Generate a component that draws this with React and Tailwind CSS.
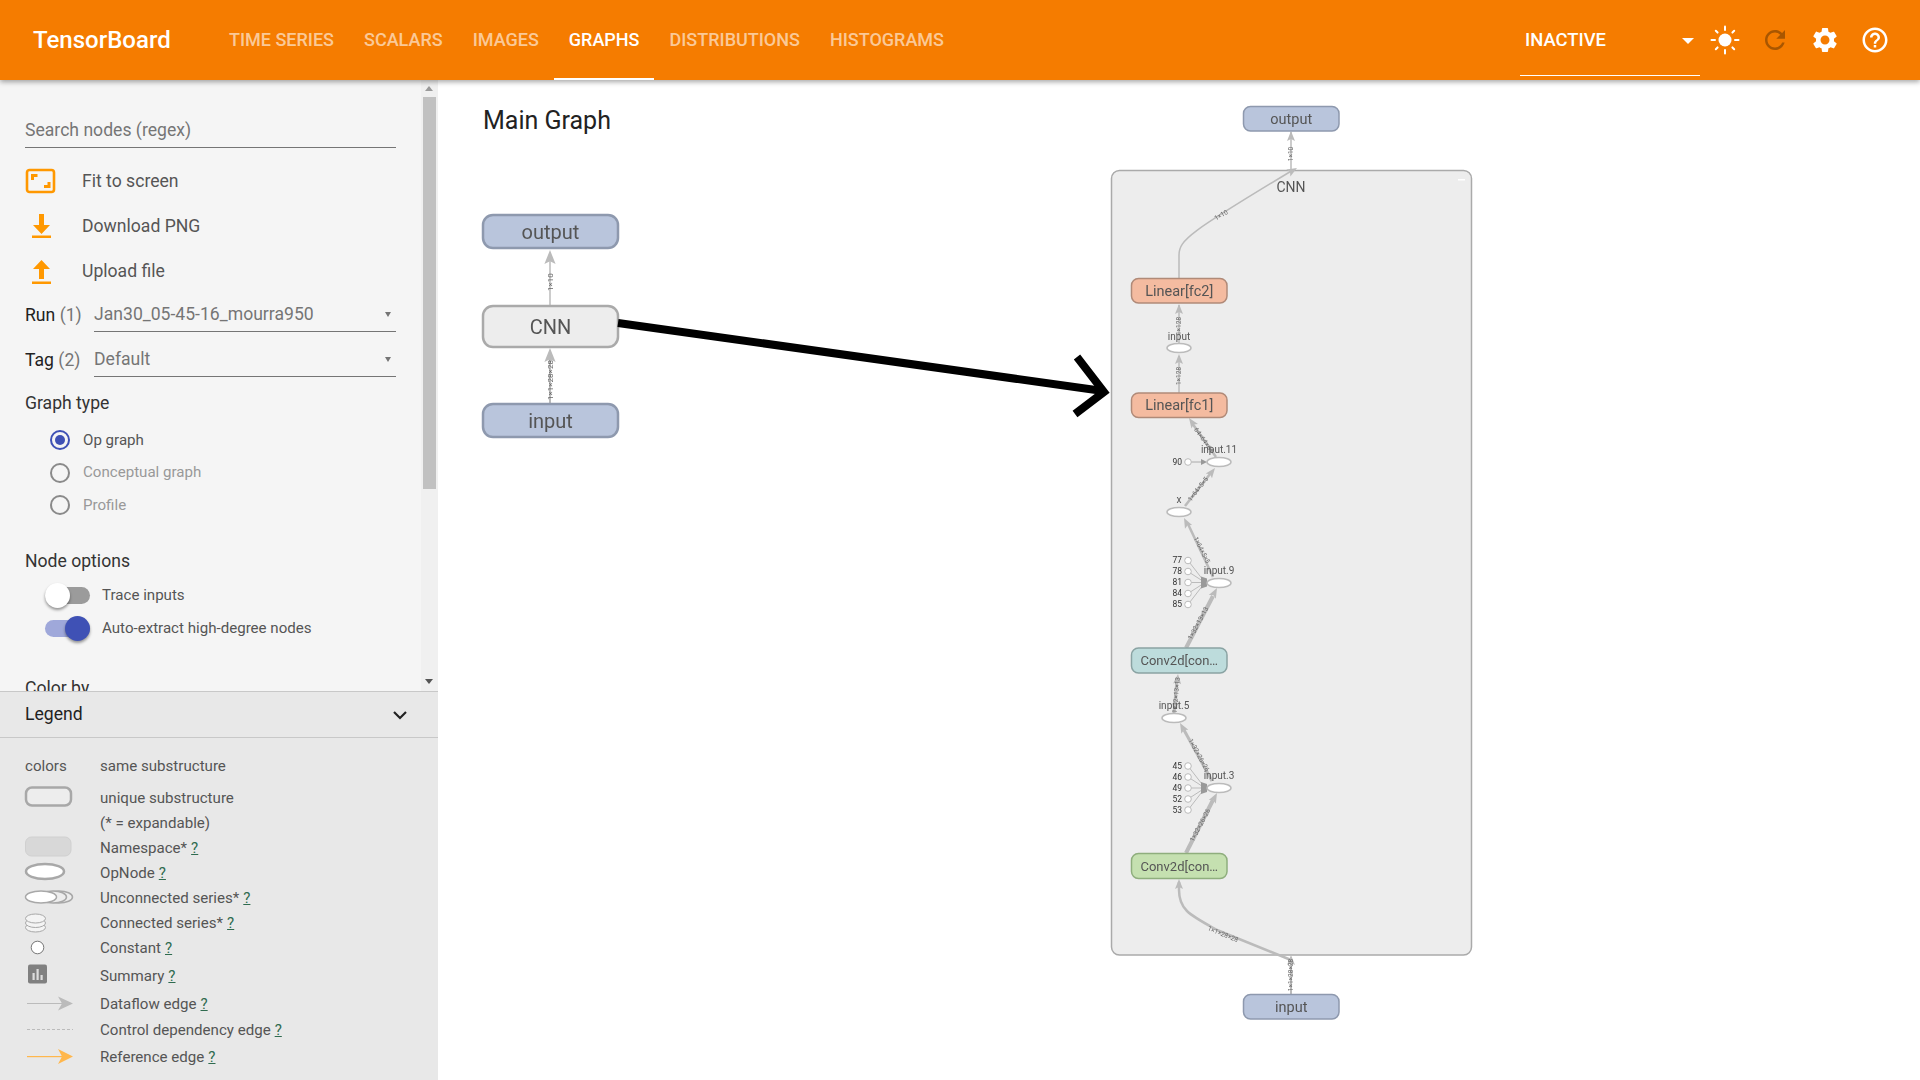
import React from "react";

const FONT = "font-['Roboto','Liberation_Sans',sans-serif]";
const P = {
  settings: "M19.14 12.94c.04-.3.06-.61.06-.94 0-.32-.02-.64-.07-.94l2.03-1.58c.18-.14.23-.41.12-.61l-1.92-3.32c-.12-.22-.37-.29-.59-.22l-2.39.96c-.5-.38-1.03-.7-1.62-.94l-.36-2.54c-.04-.24-.24-.41-.48-.41h-3.84c-.24 0-.43.17-.47.41l-.36 2.54c-.59.24-1.13.57-1.62.94l-2.39-.96c-.22-.08-.47 0-.59.22L2.74 8.87c-.12.21-.08.47.12.61l2.03 1.58c-.05.3-.09.63-.09.94s.02.64.07.94l-2.03 1.58c-.18.14-.23.41-.12.61l1.92 3.32c.12.22.37.29.59.22l2.39-.96c.5.38 1.03.7 1.62.94l.36 2.54c.05.24.24.41.48.41h3.84c.24 0 .44-.17.47-.41l.36-2.54c.59-.24 1.13-.56 1.62-.94l2.39.96c.22.08.47 0 .59-.22l1.92-3.32c.12-.22.07-.47-.12-.61l-2.01-1.58zM12 15.6c-1.98 0-3.6-1.62-3.6-3.6s1.62-3.6 3.6-3.6 3.6 1.62 3.6 3.6-1.62 3.6-3.6 3.6z",
  refresh: "M17.65 6.35C16.2 4.9 14.21 4 12 4c-4.42 0-7.99 3.58-7.99 8s3.57 8 7.99 8c3.73 0 6.84-2.55 7.73-6h-2.08c-.82 2.33-3.04 4-5.65 4-3.31 0-6-2.69-6-6s2.69-6 6-6c1.66 0 3.14.69 4.22 1.78L13 11h7V4l-2.35 2.35z",
  help: "M11 18h2v-2h-2v2zm1-16C6.48 2 2 6.48 2 12s4.48 10 10 10 10-4.48 10-10S17.52 2 12 2zm0 18c-4.41 0-8-3.59-8-8s3.59-8 8-8 8 3.59 8 8-3.59 8-8 8zm0-14c-2.21 0-4 1.79-4 4h2c0-1.1.9-2 2-2s2 .9 2 2c0 2-3 1.75-3 5h2c0-2.25 3-2.5 3-5 0-2.21-1.79-4-4-4z",
};

function Glyph({ d, color = "#fff" }) {
  return (
    <svg width="30" height="30" viewBox="0 0 24 24" fill={color}>
      <path d={d} />
    </svg>
  );
}

function Sun() {
  const rays = [0, 45, 90, 135, 180, 225, 270, 315];
  return (
    <svg width="30" height="30" viewBox="-15 -15 30 30">
      <circle r="6.5" fill="#fff" />
      {rays.map((a) => (
        <line key={a} x1="0" y1={a % 90 === 0 ? -10 : -10.5} x2="0" y2={a % 90 === 0 ? -13.5 : -13} stroke="#fff" strokeWidth="2" strokeLinecap="round" transform={`rotate(${a})`} />
      ))}
    </svg>
  );
}

function Tab({ label, active }) {
  return (
    <div className={`h-20 px-[15px] flex items-center text-[18px] font-medium border-b-2 ${active ? "text-white border-white" : "text-white/60 border-transparent"}`}>
      {label}
    </div>
  );
}

function Header() {
  return (
    <header className="relative z-10 h-20 shrink-0 bg-[#f57c00] flex items-center justify-between pr-5 shadow-[0_2px_5px_rgba(0,0,0,0.35)]">
      <div className="flex items-center">
        <div className="w-[214px] pl-[33px] text-white text-[24px] font-medium">TensorBoard</div>
        <Tab label="TIME SERIES" />
        <Tab label="SCALARS" />
        <Tab label="IMAGES" />
        <Tab label="GRAPHS" active />
        <Tab label="DISTRIBUTIONS" />
        <Tab label="HISTOGRAMS" />
      </div>
      <div className="flex items-center">
        <div className="relative w-[180px] h-20 flex items-center pl-[5px] text-white text-[18.4px] font-medium">
          INACTIVE
          <div className="absolute left-[162px] top-[38px] w-0 h-0 border-l-[6.5px] border-r-[6.5px] border-t-[6.5px] border-l-transparent border-r-transparent border-t-white" />
          <div className="absolute left-0 right-0 bottom-1 h-px bg-white" />
        </div>
        <div className="w-[50px] flex justify-center"><Sun /></div>
        <div className="w-[50px] flex justify-center"><Glyph d={P.refresh} color="#a85600" /></div>
        <div className="w-[50px] flex justify-center"><Glyph d={P.settings} /></div>
        <div className="w-[50px] flex justify-center"><Glyph d={P.help} /></div>
      </div>
    </header>
  );
}

function FitIcon() {
  return (
    <svg width="32" height="26" viewBox="0 0 32 26" fill="none" stroke="#ff9800" strokeWidth="2.6">
      <rect x="2" y="2" width="27" height="22" rx="2.5" />
      <path d="M7.5 12V7.5h5M24 14v4.5h-5" strokeWidth="3" />
    </svg>
  );
}
function DownloadIcon() {
  return (
    <svg width="32" height="26" viewBox="0 0 32 26" fill="#ff9800">
      <path d="M14 1h5v11h6l-8.5 9L8 12h6z" />
      <rect x="7" y="22.5" width="19" height="2.5" />
    </svg>
  );
}
function UploadIcon() {
  return (
    <svg width="32" height="26" viewBox="0 0 32 26" fill="#ff9800">
      <path d="M14 20h5V10h6L16.5 1 8 10h6z" />
      <rect x="7" y="22.5" width="19" height="2.5" />
    </svg>
  );
}

function ActionRow({ icon, label }) {
  return (
    <div className="h-[45.25px] flex items-center">
      <div className="w-[57px] shrink-0">{icon}</div>
      <span className="text-[17.6px] text-[#555]">{label}</span>
    </div>
  );
}

function SelectRow({ label, count, value, className }) {
  return (
    <div className={`flex items-center ${className}`}>
      <span className="w-[69px] shrink-0 text-[17.6px] text-[#222] whitespace-nowrap">{label} <span className="text-[#757575]">{count}</span></span>
      <div className="relative flex-1 h-[35px] flex items-center border-b border-[#757575] text-[17.6px] text-[#757575]">
        {value}
        <div className="absolute right-[5px] top-[15px] w-0 h-0 border-l-[3.5px] border-r-[3.5px] border-t-[5px] border-l-transparent border-r-transparent border-t-[#757575]" />
      </div>
    </div>
  );
}

function Radio({ label, checked }) {
  return (
    <div className="h-[32.5px] flex items-center pl-[25px]">
      <div className={`w-5 h-5 rounded-full border-2 flex items-center justify-center ${checked ? "border-[#3f51b5]" : "border-[#8a8a8a]"}`}>
        {checked && <div className="w-[10px] h-[10px] rounded-full bg-[#3f51b5]" />}
      </div>
      <span className={`ml-[13px] text-[15.1px] ${checked ? "text-[#555]" : "text-[#999]"}`}>{label}</span>
    </div>
  );
}

function Toggle({ label, on }) {
  return (
    <div className="h-[33px] flex items-center pl-5">
      <div className={`relative w-[45px] h-[17px] rounded-full ${on ? "bg-[#9fa8da]" : "bg-[#9b9b9b]"}`}>
        <div className={`absolute top-[-4px] w-[25px] h-[25px] rounded-full shadow-[0_2px_3px_rgba(0,0,0,0.4)] ${on ? "left-5 bg-[#3f51b5]" : "left-0 bg-white"}`} />
      </div>
      <span className="ml-3 text-[15.1px] text-[#555]">{label}</span>
    </div>
  );
}

function Controls() {
  return (
    <div className="relative flex-1 min-h-0 overflow-hidden bg-[#f5f5f5]">
      <div className="w-[421px] pl-[25px] pr-[25px] pt-[33px]">
        <div className="h-[35px] flex items-center border-b border-[#757575] text-[17.6px] text-[#757575]">Search nodes (regex)</div>
        <div className="mt-[10.5px]">
          <ActionRow icon={<FitIcon />} label="Fit to screen" />
          <ActionRow icon={<DownloadIcon />} label="Download PNG" />
          <ActionRow icon={<UploadIcon />} label="Upload file" />
        </div>
        <SelectRow label="Run" count="(1)" value="Jan30_05-45-16_mourra950" className="mt-[3px]" />
        <SelectRow label="Tag" count="(2)" value="Default" className="mt-[10px]" />
        <div className="mt-[14px] h-6 flex items-center text-[17.6px] text-[#333]">Graph type</div>
        <div className="mt-[8.5px]">
          <Radio label="Op graph" checked />
          <Radio label="Conceptual graph" />
          <Radio label="Profile" />
        </div>
        <div className="mt-[27.5px] h-6 flex items-center text-[17.6px] text-[#333]">Node options</div>
        <div className="mt-[6px]">
          <Toggle label="Trace inputs" />
          <Toggle label="Auto-extract high-degree nodes" on />
        </div>
        <div className="mt-[31px] h-6 flex items-center text-[17.6px] text-[#333]">Color by</div>
      </div>
      <div className="absolute top-0 bottom-0 right-0 w-[17px] bg-[#f0f0f0]">
        <div className="absolute left-[4px] top-[6px] w-0 h-0 border-l-[4px] border-r-[4px] border-b-[5px] border-l-transparent border-r-transparent border-b-[#9a9a9a]" />
        <div className="absolute left-[2px] top-[17px] w-[13px] h-[392px] bg-[#c1c1c1]" />
        <div className="absolute left-[4px] bottom-[7px] w-0 h-0 border-l-[4px] border-r-[4px] border-t-[5px] border-l-transparent border-r-transparent border-t-[#555]" />
      </div>
    </div>
  );
}

function Q() {
  return <span className="ml-1 underline text-[#2f6b4f]">?</span>;
}

function LegendRow({ h, icon, children }) {
  return (
    <div className={`flex items-center ${h}`}>
      <div className="w-[75px] shrink-0 h-full">
        <svg width="75" height="100%" className="block overflow-visible">{icon}</svg>
      </div>
      <span>{children}</span>
    </div>
  );
}

function LegendBody() {
  return (
    <div className="shrink-0 h-[342px] bg-[#e8e8e8] pl-[25px] pt-[16px] text-[15.1px] text-[#555]">
      <div className="h-[24px] flex items-center"><span className="w-[75px]">colors</span><span>same substructure</span></div>
      <div className="h-[7.5px]" />
      <LegendRow h="h-[25px]" icon={<rect x="1" y="1.5" width="45" height="18" rx="6" fill="#ededed" stroke="#a8a8a8" strokeWidth="2.5" />}>unique substructure</LegendRow>
      <LegendRow h="h-[25px]">(* = expandable)</LegendRow>
      <LegendRow h="h-[25px]" icon={<rect x="0.5" y="1" width="45.5" height="19" rx="6" fill="#d8d8d8" stroke="#d0d0d0" />}>Namespace*<Q /></LegendRow>
      <LegendRow h="h-[25px]" icon={<ellipse cx="20" cy="10.5" rx="19" ry="7.5" fill="#fff" stroke="#a8a8a8" strokeWidth="2.5" />}>OpNode<Q /></LegendRow>
      <LegendRow h="h-[25px]" icon={<g stroke="#a8a8a8" strokeWidth="1.5" fill="#ededed"><ellipse cx="34" cy="11" rx="13.5" ry="6" /><ellipse cx="28" cy="11" rx="13.5" ry="6" /><ellipse cx="16" cy="11" rx="15.5" ry="6" fill="#fff" /></g>}>Unconnected series*<Q /></LegendRow>
      <LegendRow h="h-[25px]" icon={<g stroke="#a8a8a8" fill="#f4f4f4"><ellipse cx="10.5" cy="16.5" rx="10" ry="4.5" /><ellipse cx="10.5" cy="12" rx="10" ry="4.5" /><ellipse cx="10.5" cy="7.5" rx="10" ry="4.5" /></g>}>Connected series*<Q /></LegendRow>
      <LegendRow h="h-[25px]" icon={<circle cx="12.5" cy="11.5" r="6.3" fill="#fff" stroke="#777" />}>Constant<Q /></LegendRow>
      <LegendRow h="h-[31px]" icon={<g><rect x="3" y="3.5" width="19" height="19" rx="2" fill="#808080" /><rect x="7.5" y="12" width="2.2" height="7" fill="#ddd" /><rect x="11.5" y="8" width="2.2" height="11" fill="#ddd" /><rect x="15.5" y="14" width="2.2" height="5" fill="#ddd" /></g>}>Summary<Q /></LegendRow>
      <LegendRow h="h-[25px]" icon={<g fill="#bbb"><rect x="2" y="11" width="38" height="1" /><path d="M33 4.5L48 11.5L33 18.5L37 11.5z" /></g>}>Dataflow edge<Q /></LegendRow>
      <LegendRow h="h-[27px]" icon={<line x1="2" y1="12.5" x2="48" y2="12.5" stroke="#bbb" strokeDasharray="3 2" />}>Control dependency edge<Q /></LegendRow>
      <LegendRow h="h-[27px]" icon={<g fill="#ffb74d"><rect x="2" y="12" width="38" height="1.2" /><path d="M33 5L48 12.5L33 20L37 12.5z" /></g>}>Reference edge<Q /></LegendRow>
    </div>
  );
}

function Node({ x, y, w, h, fill, stroke, label, size = 14.5, sw = 2, rx = 7, color = "#555" }) {
  return (
    <g>
      <rect x={x} y={y} width={w} height={h} rx={rx} fill={fill} stroke={stroke} strokeWidth={sw} />
      <text x={x + w / 2} y={y + h / 2} dy="0.35em" textAnchor="middle" fontSize={size} fill={color}>{label}</text>
    </g>
  );
}

function Edge({ d, w = 1.5, tip, angle, s = 1 }) {
  return (
    <g>
      <path d={d} fill="none" stroke="#bbb" strokeWidth={w} />
      {tip && <path d={`M0 0L${-10 * s} ${-4 * s}L${-8 * s} 0L${-10 * s} ${4 * s}z`} fill="#bbb" transform={`translate(${tip[0]} ${tip[1]}) rotate(${angle})`} />}
    </g>
  );
}

function ELabel({ x, y, a = -90, t, size = 6.5, fill = "#666" }) {
  return <text x={x} y={y} dy="0.35em" textAnchor="middle" fontSize={size} fill={fill} transform={`rotate(${a} ${x} ${y})`}>{t}</text>;
}

function Oval({ cx, cy, label, lx, ly }) {
  return (
    <g>
      <ellipse cx={cx} cy={cy} rx="12" ry="4.5" fill="#fff" stroke="#bbb" strokeWidth="1.5" />
      <text x={lx ?? cx} y={ly ?? cy - 13} dy="0.35em" textAnchor="middle" fontSize="10" fill="#555">{label}</text>
    </g>
  );
}

function Consts({ cy, items }) {
  const ys = [-22, -11, 0, 11, 22];
  return (
    <g>
      {items.map((n, i) => (
        <g key={n}>
          <line x1="1188" y1={cy + ys[i]} x2="1205" y2={cy} stroke="#bbb" strokeWidth="1" />
          <circle cx="1188" cy={cy + ys[i]} r="3.3" fill="#fff" stroke="#bbb" />
          <text x="1182" y={cy + ys[i]} dy="0.35em" textAnchor="end" fontSize="8.5" fill="#333">{n}</text>
        </g>
      ))}
      <path d={`M1207 ${cy - 4}L1207 ${cy + 4}L1201 ${cy + 6}L1201 ${cy - 6}z`} fill="#999" />
    </g>
  );
}

function Graph() {
  return (
    <svg className="absolute inset-0 blur-[0.35px]" width="1482" height="1000" viewBox="438 80 1482 1000">
      {/* collapsed graph */}
      <Edge d="M550 305V256" tip={[550, 250]} angle={-90} s={1.4} />
      <Edge d="M550 403V354" w={2} tip={[550, 348]} angle={-90} s={1.4} />
      <ELabel x={550} y={282} t="1×10" size={8} />
      <ELabel x={550} y={380} t="1×1×28×28" size={8} />
      <Node x={483} y={215} w={135} h={33} rx={10} fill="#b9c5dc" stroke="#8e99ae" label="output" size={20} sw={2.5} />
      <Node x={483} y={306} w={135} h={41} rx={10} fill="#ededed" stroke="#aaa" label="CNN" size={20} sw={2.5} />
      <Node x={483} y={404} w={135} h={33} rx={10} fill="#b9c5dc" stroke="#8e99ae" label="input" size={20} sw={2.5} />

      {/* black arrow */}
      <path d="M618 323L1103 391" stroke="#000" strokeWidth="8" fill="none" />
      <path d="M1077 357L1104 392L1075 414" stroke="#000" strokeWidth="8" fill="none" />

      {/* expanded CNN */}
      <rect x="1111.5" y="170.5" width="360" height="784.5" rx="8" fill="#ededed" stroke="#aaa" strokeWidth="1.5" />
      <rect x="1458" y="179" width="7" height="1.5" fill="#fff" />
      <text x="1291" y="187" dy="0.35em" textAnchor="middle" fontSize="14" fill="#555">CNN</text>

      <Edge d="M1291 170V132" w={1.5} tip={[1291, 131]} angle={-90} />
      <ELabel x={1291} y={154} t="1×10" />
      <Edge d="M1179 278V255C1179 240 1190 232 1293 170" w={1.5} tip={[1297, 168]} angle={-30} />
      <ELabel x={1221} y={215} a={-30} t="1×10" />
      <Edge d="M1179 343V305" tip={[1179, 304]} angle={-90} />
      <ELabel x={1179} y={326} t="1×128" />
      <Edge d="M1179 393V356" tip={[1179, 354]} angle={-90} />
      <ELabel x={1179} y={376} t="1×128" />
      <Edge d="M1216 457L1192 423" w={2.5} tip={[1189, 418]} angle={-125} />
      <ELabel x={1204} y={440} a={55} t="64×64×64" />
      <Edge d="M1185 506L1210 474" w={2.5} tip={[1215, 468]} angle={-52} />
      <ELabel x={1198} y={489} a={-52} t="1×64×5×5" />
      <Edge d="M1213 577L1188 524" w={2.5} tip={[1184, 518]} angle={-117} />
      <ELabel x={1202} y={550} a={63} t="1×64×5×5" />
      <Edge d="M1186 648L1213 596" w={4} tip={[1217, 588]} angle={-62} />
      <ELabel x={1198} y={623} a={-62} t="1×32×13×13" />
      <Edge d="M1174 713L1177 680" w={3} tip={[1178, 674]} angle={-85} />
      <ELabel x={1176} y={695} a={-85} t="1×32×13×13" />
      <Edge d="M1212 781L1184 730" w={3} tip={[1180, 723]} angle={-119} />
      <ELabel x={1199} y={755} a={61} t="1×32×26×26" />
      <Edge d="M1186 853L1213 800" w={4} tip={[1217, 793]} angle={-62} />
      <ELabel x={1200} y={825} a={-62} t="1×32×26×26" />
      <Edge d="M1291 960L1217 930C1190 915 1179 910 1179 890V882" w={2.5} tip={[1179, 879]} angle={-90} />
      <ELabel x={1223} y={934} a={22} t="1×1×28×28" />
      <Edge d="M1291 994V958" w={2} tip={[1291, 955]} angle={-90} />
      <ELabel x={1291} y={975} t="1×1×28×28" />

      <Consts cy={582.5} items={["77", "78", "81", "84", "85"]} />
      <Consts cy={788} items={["45", "46", "49", "52", "53"]} />
      <line x1="1191" y1="462" x2="1205" y2="462" stroke="#aaa" />
      <path d="M1207 462L1201 459V465z" fill="#999" />
      <circle cx="1188" cy="462" r="3.3" fill="#fff" stroke="#bbb" />
      <text x="1182" y="462" dy="0.35em" textAnchor="end" fontSize="8.5" fill="#333">90</text>

      <Oval cx={1179} cy={348} label="input" lx={1179} ly={336} />
      <Oval cx={1219} cy={462} label="input.11" />
      <Oval cx={1179} cy={512} label="x" />
      <Oval cx={1219} cy={583} label="input.9" />
      <Oval cx={1174} cy={718} label="input.5" />
      <Oval cx={1219} cy={788} label="input.3" />

      <Node x={1243.5} y={106.5} w={95.5} h={24.5} fill="#b9c5dc" stroke="#8e99ae" label="output" sw={1.5} />
      <Node x={1243.5} y={994.5} w={95.5} h={24.5} fill="#b9c5dc" stroke="#8e99ae" label="input" sw={1.5} />
      <Node x={1131.5} y={278.5} w={95.5} h={24.5} fill="#f4bba0" stroke="#b08a78" label="Linear[fc2]" sw={1.5} />
      <Node x={1131.5} y={393} w={95.5} h={24.5} fill="#f4bba0" stroke="#b08a78" label="Linear[fc1]" sw={1.5} />
      <Node x={1131.5} y={648} w={95.5} h={25} fill="#bddcdc" stroke="#8aa3a3" label="Conv2d[con…" size={13} sw={1.5} />
      <Node x={1131.5} y={853.5} w={95.5} h={25} fill="#c5e0b0" stroke="#8fae7d" label="Conv2d[con…" size={13} sw={1.5} />
    </svg>
  );
}

export default function App() {
  return (
    <div className={`w-[1920px] h-[1080px] flex flex-col overflow-hidden bg-white ${FONT}`}>
      <Header />
      <div className="flex-1 min-h-0 flex">
        <aside className="w-[438px] shrink-0 flex flex-col">
          <Controls />
          <div className="shrink-0 h-[47px] flex items-center justify-between pl-[25px] pr-[30px] bg-[#e8e8e8] border-t border-b border-[#c8c8c8] text-[17.6px] text-[#222]">
            Legend
            <svg width="16" height="10" viewBox="0 0 16 10" fill="none" stroke="#222" strokeWidth="2.2"><path d="M2 2l6 6 6-6" /></svg>
          </div>
          <LegendBody />
        </aside>
        <main className="relative flex-1">
          <h2 className="relative pl-[45px] pt-[25px] text-[25px] leading-8 font-normal text-[#222]">Main Graph</h2>
          <Graph />
        </main>
      </div>
    </div>
  );
}
